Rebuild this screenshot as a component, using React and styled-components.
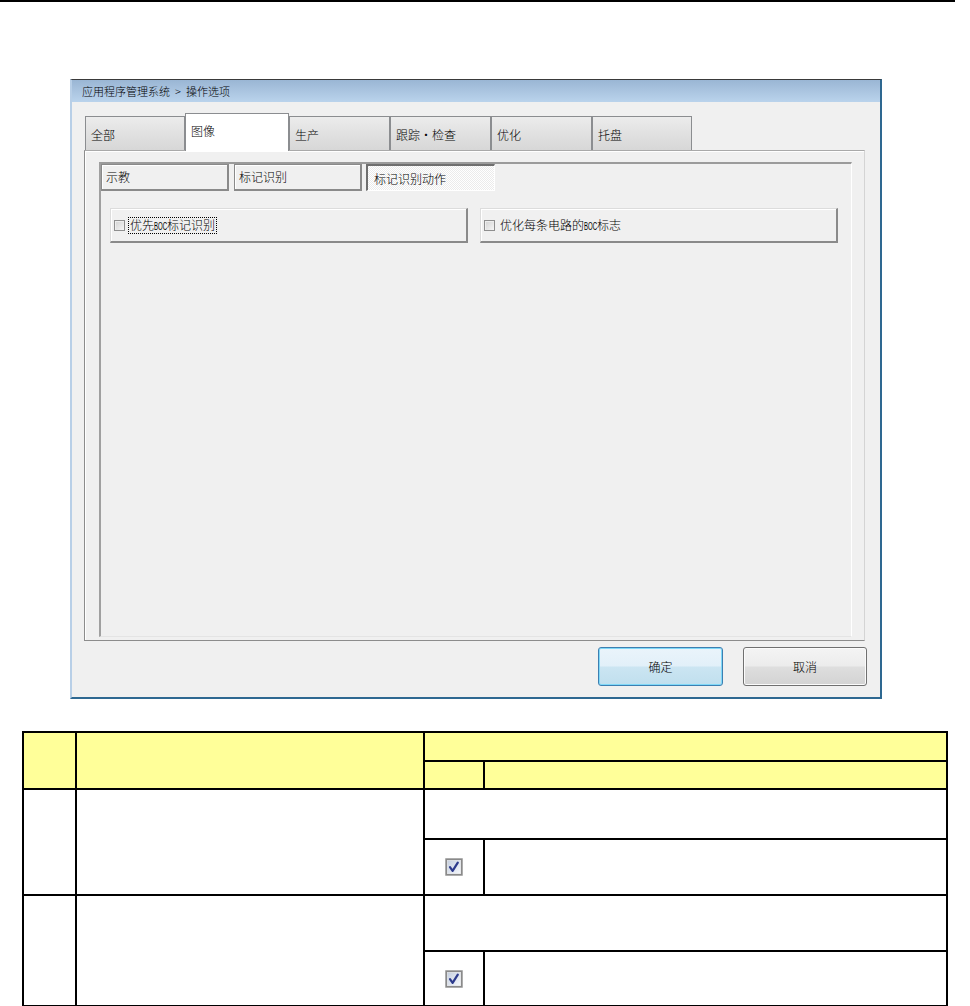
import React from "react";
import styled, { createGlobalStyle } from "styled-components";

const GlobalStyle = createGlobalStyle`
  html, body {
    margin: 0;
    padding: 0;
    background: #ffffff;
  }
  body {
    font-family: "Noto Sans CJK SC", "Liberation Sans", sans-serif;
    font-weight: 300;
    color: #000;
  }
`;

const mainTabs = [
  { label: "全部", width: 100 },
  { label: "图像", width: 104, active: true },
  { label: "生产", width: 101 },
  { label: "跟踪・检查", width: 101 },
  { label: "优化", width: 101 },
  { label: "托盘", width: 100 },
];

const subTabs = [
  { label: "示教", width: 128, gap: 0 },
  { label: "标记识别", width: 128, gap: 5 },
  { label: "标记识别动作", width: 129, gap: 4, active: true },
];

function CheckedIcon() {
  return (
    <svg width="20" height="20" viewBox="0 0 20 20">
      <defs>
        <linearGradient id="cb" x1="0" y1="0" x2="1" y2="1">
          <stop offset="0" stopColor="#c6d0e0" />
          <stop offset="1" stopColor="#f4f7fc" />
        </linearGradient>
      </defs>
      <rect x="1" y="1" width="18" height="18" fill="#e2e2e2" />
      <rect x="2.2" y="2.2" width="15.6" height="15.6" fill="none" stroke="#8a8a8a" strokeWidth="1.6" />
      <rect x="3.6" y="3.6" width="12.8" height="12.8" fill="url(#cb)" />
      <path d="M6 10.2 L8.6 13.8 L13.8 5.6" fill="none" stroke="#2c3a8c" strokeWidth="2.2" strokeLinecap="round" strokeLinejoin="round" />
    </svg>
  );
}

function App() {
  return (
    <>
      <GlobalStyle />
      <TopRule />
      <Window>
        <TitleBar>
          应用程序管理系统<Sep>&gt;</Sep>操作选项
        </TitleBar>
        <WindowBody>
          <TabStrip>
            {mainTabs.map((t) => (
              <MainTab key={t.label} $w={t.width} $active={t.active}>
                {t.label}
              </MainTab>
            ))}
          </TabStrip>
          <TabPanel>
            <InnerPanel>
              <SubTabRow>
                {subTabs.map((t) => (
                  <SubTab key={t.label} $w={t.width} $gap={t.gap} $active={t.active}>
                    {t.label}
                  </SubTab>
                ))}
              </SubTabRow>
              <OptionRow>
                <OptionFrame>
                  <Box />
                  <OptionLabel $focus>
                    优先<Latin>BOC</Latin>标记识别
                  </OptionLabel>
                </OptionFrame>
                <OptionFrame>
                  <Box />
                  <OptionLabel>
                    优化每条电路的<Latin>BOC</Latin>标志
                  </OptionLabel>
                </OptionFrame>
              </OptionRow>
            </InnerPanel>
          </TabPanel>
          <ButtonRow>
            <DialogButton $primary>确定</DialogButton>
            <DialogButton>取消</DialogButton>
          </ButtonRow>
        </WindowBody>
      </Window>

      <Table>
        <colgroup>
          <col style={{ width: 53 }} />
          <col style={{ width: 348 }} />
          <col style={{ width: 60 }} />
          <col style={{ width: 463 }} />
        </colgroup>
        <thead>
          <Row $h={29}>
            <HeadCell rowSpan={2} />
            <HeadCell rowSpan={2} />
            <HeadCell colSpan={2} />
          </Row>
          <Row $h={28}>
            <HeadCell />
            <HeadCell />
          </Row>
        </thead>
        <tbody>
          <Row $h={50}>
            <Cell rowSpan={2} />
            <Cell rowSpan={2} />
            <Cell colSpan={2} />
          </Row>
          <Row $h={56}>
            <IconCell>
              <CheckedIcon />
            </IconCell>
            <Cell />
          </Row>
          <Row $h={56}>
            <Cell rowSpan={2} />
            <Cell rowSpan={2} />
            <Cell colSpan={2} />
          </Row>
          <Row $h={55}>
            <IconCell>
              <CheckedIcon />
            </IconCell>
            <Cell />
          </Row>
        </tbody>
      </Table>
    </>
  );
}

const TopRule = styled.div`
  height: 2px;
  width: 955px;
  background: #000;
`;

const Window = styled.section`
  margin: 77px 0 0 70px;
  width: 808px;
  border-top: 1px solid #3a3a3a;
  border-left: 2px solid #b8cfe7;
  border-right: 2px solid #2e6891;
  border-bottom: 2px solid #2e6891;
  background: #f0f0f0;
`;

const TitleBar = styled.div`
  height: 22px;
  line-height: 22px;
  padding-left: 10px;
  font-size: 11px;
  background: linear-gradient(#9ab6d4, #bad3ec);
  white-space: nowrap;
`;

const Sep = styled.span`
  margin: 0 5px;
`;

const WindowBody = styled.div`
  padding: 11px 14px 11px 12px;
`;

const TabStrip = styled.div`
  display: flex;
  align-items: flex-end;
  height: 37px;
  padding-left: 1px;
`;

const MainTab = styled.div`
  position: relative;
  z-index: 1;
  box-sizing: border-box;
  width: ${(p) => p.$w}px;
  height: ${(p) => (p.$active ? 38 : 34)}px;
  margin-bottom: ${(p) => (p.$active ? -1 : 0)}px;
  padding: ${(p) => (p.$active ? "10px" : "11px")} 0 0 5px;
  border: 1px solid #8b8d90;
  border-bottom: none;
  background: ${(p) =>
    p.$active ? "#ffffff" : "linear-gradient(#ececec 0%, #e2e2e2 45%, #d7d7d7 100%)"};
  font-size: 12px;
  line-height: 14px;
  white-space: nowrap;
`;

const TabPanel = styled.div`
  display: flex;
  flex-direction: column;
  box-sizing: border-box;
  width: 781px;
  height: 491px;
  padding: 11px 12px 3px 14px;
  border: 1px solid #8c8c8c;
  border-right-color: #d4d4d4;
  border-top-color: #a9a9a9;
  background: #f0f0f0;
  box-shadow: inset 1px 1px #ffffff;
`;

const InnerPanel = styled.div`
  flex: 1;
  border-top: 2px solid #9b9b9b;
  border-left: 2px solid #a0a0a0;
  border-right: 1px solid #ffffff;
  border-bottom: 1px solid #e4e4e4;
`;

const SubTabRow = styled.div`
  display: flex;
  align-items: flex-start;
`;

const SubTab = styled.div`
  box-sizing: border-box;
  width: ${(p) => p.$w}px;
  height: 27px;
  margin-left: ${(p) => p.$gap}px;
  padding-left: ${(p) => (p.$active ? 6 : 4)}px;
  font-size: 12px;
  line-height: ${(p) => (p.$active ? 25 : 24)}px;
  white-space: nowrap;
  ${(p) =>
    p.$active
      ? `
    border-top: 2px solid #6f6f6f;
    border-left: 2px solid #6f6f6f;
    border-right: 1px solid #ffffff;
    border-bottom: 1px solid #ffffff;
    background-color: #f6f6f6;
    background-image: repeating-conic-gradient(#ffffff 0 25%, #ebebeb 0 50%);
    background-size: 2px 2px;
  `
      : `
    border: 1px solid #8a8a8a;
    border-bottom-width: 2px;
    border-right-width: 2px;
    background: #f0f0f0;
    box-shadow: inset 1px 1px #ffffff;
  `}
`;

const OptionRow = styled.div`
  display: flex;
  gap: 12px;
  padding: 17px 0 0 9px;
`;

const OptionFrame = styled.div`
  display: flex;
  align-items: center;
  gap: 3px;
  box-sizing: border-box;
  width: 358px;
  height: 35px;
  padding-left: 3px;
  border: 1px solid #dcdcdc;
  border-right: 2px solid #8a8a8a;
  border-bottom: 2px solid #8a8a8a;
  background: #f0f0f0;
  box-shadow: inset 1px 1px #ffffff;
`;

const Box = styled.span`
  box-sizing: border-box;
  width: 11px;
  height: 11px;
  border: 1px solid #8f8f8f;
  background: linear-gradient(135deg, #d2d2d2, #f6f6f6);
  box-shadow: inset 1px 1px #eeeeee;
  flex: none;
`;

const OptionLabel = styled.span`
  font-size: 12px;
  line-height: 14px;
  padding: 0 1px;
  border: 1px ${(p) => (p.$focus ? "dotted #000" : "solid transparent")};
  white-space: nowrap;
`;

const Latin = styled.span`
  display: inline-block;
  width: 13px;
  font-family: "Liberation Sans", sans-serif;
  font-weight: 400;
  font-size: 11px;
  transform: scaleX(0.55);
  transform-origin: left center;
  white-space: nowrap;
`;

const ButtonRow = styled.div`
  display: flex;
  justify-content: flex-end;
  gap: 20px;
  margin-top: 6px;
  margin-right: -1px;
`;

const DialogButton = styled.button`
  box-sizing: border-box;
  width: ${(p) => (p.$primary ? 125 : 124)}px;
  height: 39px;
  border-radius: 3px;
  font-family: "Noto Sans CJK SC", sans-serif;
  font-weight: 300;
  font-size: 12px;
  color: #000;
  padding: 0;
  border: 1px solid ${(p) => (p.$primary ? "#3c7fb1" : "#707070")};
  background: ${(p) =>
    p.$primary
      ? "linear-gradient(#eaf4fb 0%, #e2f0f9 48%, #cbe5f2 52%, #c0dfee 100%)"
      : "linear-gradient(#f4f4f4 0%, #ececec 48%, #dedede 52%, #d3d3d3 100%)"};
  box-shadow: inset 0 0 0 1px ${(p) => (p.$primary ? "#7fd8f8" : "#fbfbfb")};
`;

const Table = styled.table`
  margin: 32px 0 0 22px;
  width: 924px;
  table-layout: fixed;
  border-collapse: collapse;
`;

const Row = styled.tr`
  height: ${(p) => p.$h}px;
`;

const Cell = styled.td`
  border: 2px solid #000;
  padding: 0;
  background: #ffffff;
`;

const HeadCell = styled(Cell)`
  background: #ffff99;
`;

const IconCell = styled(Cell)`
  text-align: center;
  vertical-align: middle;
  line-height: 0;
`;

export default App;
